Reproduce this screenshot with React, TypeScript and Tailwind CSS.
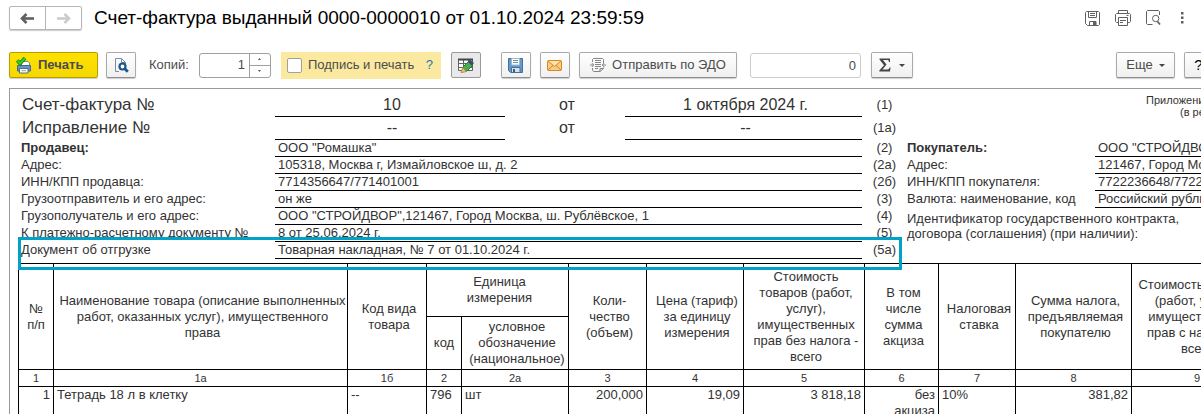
import React from "react";

type TPartyRow = {
    label: string;
    value: string;
    code: string;
    bold?: boolean;
};

const sellerRows: TPartyRow[] = [
    { label: "Продавец:", value: 'ООО "Ромашка"', code: "(2)", bold: true },
    { label: "Адрес:", value: "105318, Москва г, Измайловское ш, д. 2", code: "(2а)" },
    { label: "ИНН/КПП продавца:", value: "7714356647/771401001", code: "(2б)" },
    { label: "Грузоотправитель и его адрес:", value: "он же", code: "(3)" },
    {
        label: "Грузополучатель и его адрес:",
        value: 'ООО "СТРОЙДВОР",121467, Город Москва, ш. Рублёвское, 1',
        code: "(4)",
    },
    { label: "К платежно-расчетному документу №", value: "8 от 25.06.2024 г.", code: "(5)" },
    { label: "Документ об отгрузке", value: "Товарная накладная, № 7 от 01.10.2024 г.", code: "(5а)" },
];

const buyerRows = [
    { label: "Покупатель:", value: 'ООО "СТРОЙДВОР"', bold: true },
    { label: "Адрес:", value: "121467, Город Москва, ш. Рублёвское, 1" },
    { label: "ИНН/КПП покупателя:", value: "7722236648/772201001" },
    { label: "Валюта: наименование, код", value: "Российский рубль, 643" },
];

const columnCodes = ["1", "1а", "1б", "2", "2а", "3", "4", "5", "6", "7", "8", "9"];

const BackIcon = () => (
    <svg width="15" height="11" viewBox="0 0 15 11" fill="none" stroke="currentColor" strokeWidth="2.6">
        <path d="M2 5.500h12" />
        <path d="M6.500 1L2 5.500l4.500 4.500" />
    </svg>
);

const PrintIcon = () => (
    <svg width="16" height="17" viewBox="0 0 16 17">
        <path d="M5.500 4.500h6.500l1.500 1.500v3h-8z" fill="#fff" stroke="#7288a0" />
        <path d="M1.500 8.500h13v5.500h-13z" fill="#6796c4" stroke="#37689a" />
        <path d="M3.500 11.500h8.500v4.500h-8.500z" fill="#fff" stroke="#536d88" />
        <path d="M5.500 13.700h4.500" stroke="#8a9bab" />
        <path d="M1.200 3.500L4 6.500l5-5.500" fill="none" stroke="#187a10" strokeWidth="3.600" />
        <path d="M1.200 3.500L4 6.500l5-5.500" fill="none" stroke="#3fce23" strokeWidth="2" />
    </svg>
);

const PreviewIcon = () => (
    <svg width="15" height="16" viewBox="0 0 15 16" fill="none">
        <path d="M5 14.500H1.500V1.500h6l4 4v2M7.500 1.500v4h4" stroke="#7890a5" />
        <circle cx="8.500" cy="9.500" r="3" fill="#fff" stroke="#1c5689" strokeWidth="2.200" />
        <path d="M10.800 11.800l3 3" stroke="#1c5689" strokeWidth="2.800" />
    </svg>
);

const EditTableIcon = () => (
    <svg width="17" height="16" viewBox="0 0 17 16" fill="none">
        <path d="M1.500 2.500h14v11h-14zM1.500 6.500h14M1.500 10.500h14M6.500 2.500v11M11.500 2.500v11" fill="#fff" stroke="#626262" />
        <path d="M1 2.500h15" stroke="#444" strokeWidth="2" />
        <path d="M5.500 10.500l6.500-6.500 4 4-6.500 6.500z" fill="#46b04a" stroke="#287734" />
        <path d="M11 5l2-2.500 4 3.500-2.500 2.500z" fill="#3d4b6b" />
        <path d="M5.500 10.500l4 4-5.500 1.300z" fill="#ebbb79" stroke="#a37a40" strokeWidth=".7" />
    </svg>
);

const DiskIcon = () => (
    <svg width="15" height="15" viewBox="0 0 15 15">
        <path d="M.5.5h14v14H2.500l-2-2z" fill="#6798c7" stroke="#41719f" />
        <path d="M3.500.5h8v6.500h-8z" fill="#fff" stroke="#9eb9d2" />
        <path d="M5 2.500h5M5 4.500h5" stroke="#6e91b1" />
        <path d="M3.500 9.500h8.500v5h-8.500z" fill="#d7e1e9" stroke="#41719f" />
        <path d="M5 11h2v3H5z" fill="#345e86" />
    </svg>
);

const MailIcon = () => (
    <svg width="15" height="11" viewBox="0 0 15 11">
        <rect x=".5" y=".5" width="14" height="10" rx="1" fill="#f8cd85" stroke="#d8881d" />
        <path d="M1 10l5-4.500M14 10L9 5.500" stroke="#d18424" />
        <path d="M1 1l6.500 5.500L14 1" fill="#ffe2ac" stroke="#d18424" />
    </svg>
);

const EdoIcon = () => (
    <svg width="16" height="16" viewBox="0 0 16 16" fill="none" stroke="#858585">
        <path d="M2.500 5V2.500l1-1h9l1 1V6M2.500 11v2.500l1 1h6.500l3.500-3V10.500M10 14.500v-3h3.500" />
        <path d="M5 3.500h6M5 5.500h6M5 7.500h6M5 9.500h6M5 11.500h3" />
        <path d="M0 8h3.500M1.800 6L3.800 8l-2 2M16 8h-3.500M14.200 6l-2 2 2 2" />
    </svg>
);

const SigmaIcon = () => (
    <svg width="12" height="14" viewBox="0 0 12 14" fill="#454545">
        <path d="M.5.5h10.500v3.500h-1C9.700 2.300 9.300 2 8 2H4l3.500 4.500L3.500 11.500H8.500c1.300 0 1.700-.7 2-2h1L11 13.500H.3v-1L5 7.200.5 1.500z" />
    </svg>
);

const Caret = () => (
    <svg width="6" height="3" viewBox="0 0 6 3" fill="#444">
        <path d="M0 0h6L3 3z" />
    </svg>
);

const SaveOutline = () => (
    <svg width="15" height="15" viewBox="0 0 15 15" fill="none" stroke="#606060">
        <path d="M1.500.5h12l1 1v12l-1 1h-11l-2-2v-11zM3.500.5v6h8v-6M5 2.500h5M5 4.500h5M4.500 14.500v-4h6.500v4" />
        <path d="M8 11h3v3H8z" fill="#606060" stroke="none" />
    </svg>
);

const PrintOutline = () => (
    <svg width="16" height="16" viewBox="0 0 16 16" fill="none" stroke="#606060">
        <path d="M3.500 3.500v-3h9v3M3.500 12.500h-2l-1-1v-7l1-1h13l1 1v7l-1 1h-2" />
        <path d="M3.500 7.500h9v8h-9zM5 10.500h6M5 12.500h3M11.500 5.500h2" />
    </svg>
);

const PreviewOutline = () => (
    <svg width="15" height="16" viewBox="0 0 15 16" fill="none" stroke="#606060">
        <path d="M6.500 14.500h-5l-1-1v-12l1-1h11l1 1V5" />
        <circle cx="9.700" cy="8.500" r="3.200" />
        <path d="M11.500 11.500l2.500 3" strokeWidth="1.800" />
    </svg>
);

const buttonStyle =
    "flex h-[26px] shrink-0 items-center justify-center rounded-[2px] border border-[#a9a9a9] border-b-[#8e8e8e] bg-linear-to-b from-white to-[#f0f0f0] shadow-[0_1px_1px_#cccccc]";

const TitleBar = () => (
    <header className="flex h-9 items-center pl-[9px]">
        <div className="flex h-6 shrink-0 rounded-[2px] border border-[#b5b5b5] shadow-[0_1px_1px_#cccccc]">
            <button type="button" aria-label="Назад" className="flex w-9 items-center justify-center border-r border-[#b5b5b5] text-[#606060]">
                <BackIcon />
            </button>
            <button type="button" aria-label="Вперед" className="flex w-[35px] items-center justify-center text-[#cccccc]">
                <span className="rotate-180"><BackIcon /></span>
            </button>
        </div>
        <h1 className="ml-3 whitespace-nowrap pb-px text-[19px] leading-6 text-black">
            Счет-фактура выданный 0000-0000010 от 01.10.2024 23:59:59
        </h1>
        <div className="ml-auto flex shrink-0 items-center gap-[15px] pr-[17px]">
            <button type="button" aria-label="Сохранить"><SaveOutline /></button>
            <button type="button" aria-label="Печать"><PrintOutline /></button>
            <button type="button" aria-label="Просмотр"><PreviewOutline /></button>
            <button type="button" aria-label="Меню" className="ml-[5px]">
                <svg width="3" height="12" viewBox="0 0 3 12" fill="#606060">
                    <path d="M0 0h2.500v2.500H0zM0 4.500h2.500V7H0zM0 9h2.500v2.500H0z" />
                </svg>
            </button>
        </div>
    </header>
);

const Toolbar = () => (
    <div className="mt-4 flex h-[26px] items-center whitespace-nowrap pl-[9px] text-[13px] text-[#4c4c4c]">
        <button
            type="button"
            className="flex h-[26px] w-[89px] shrink-0 items-center gap-1.5 rounded-[2px] border border-[#b79d00] bg-linear-to-b from-[#ffe100] to-[#f5d800] pl-1.5 font-bold shadow-[0_1px_1px_#cccccc]"
        >
            <PrintIcon />
            Печать
        </button>
        <button type="button" aria-label="Просмотр" className={`${buttonStyle} ml-2 w-[30px]`}>
            <PreviewIcon />
        </button>
        <label htmlFor="copies" className="ml-[13px]">Копий:</label>
        <div className="ml-[10px] flex h-[25px] w-[72px] shrink-0 overflow-hidden rounded-[3px] border border-[#a0a0a0]">
            <input id="copies" type="text" defaultValue="1" className="w-[50px] border-r border-[#a0a0a0] pr-1 text-right outline-none" />
            <div className="flex flex-1 flex-col">
                <button type="button" aria-label="Больше" className="flex flex-1 items-center justify-center border-b border-[#a0a0a0]">
                    <svg width="3" height="2" viewBox="0 0 3 2" fill="#555"><path d="M0 2h3L1.500 0z" /></svg>
                </button>
                <button type="button" aria-label="Меньше" className="flex flex-1 items-center justify-center">
                    <svg width="3" height="2" viewBox="0 0 3 2" fill="#555"><path d="M0 0h3L1.500 2z" /></svg>
                </button>
            </div>
        </div>
        <div className="ml-[10px] flex h-[27px] w-40 shrink-0 items-center bg-[#fbe9a0] pl-1.5">
            <input
                id="sign"
                type="checkbox"
                className="size-[15px] appearance-none rounded-[2px] border border-[#a0a0a0] bg-white checked:bg-[#4c4c4c]"
            />
            <label htmlFor="sign" className="ml-1.5">Подпись и печать</label>
            <a href="#help" className="ml-auto pr-2 text-[#1a78b4]">?</a>
        </div>
        <button
            type="button"
            aria-label="Редактирование"
            className="ml-[10px] flex h-[26px] w-[30px] shrink-0 items-center justify-center rounded-[2px] border border-[#999999] bg-[#e9e9e9]"
        >
            <EditTableIcon />
        </button>
        <button type="button" aria-label="Сохранить" className={`${buttonStyle} ml-5 w-[30px]`}>
            <DiskIcon />
        </button>
        <button type="button" aria-label="Отправить по почте" className={`${buttonStyle} ml-[9px] w-[30px]`}>
            <MailIcon />
        </button>
        <button type="button" className={`${buttonStyle} ml-[9px] w-[158px] gap-1.5`}>
            <EdoIcon />
            Отправить по ЭДО
        </button>
        <input
            type="text"
            aria-label="Сумма"
            defaultValue="0"
            className="ml-[13px] h-[25px] w-[111px] shrink-0 rounded-[3px] border border-[#cccccc] pr-1 text-right"
        />
        <button type="button" aria-label="Итоги" className={`${buttonStyle} ml-[10px] w-[42px] gap-2`}>
            <SigmaIcon />
            <Caret />
        </button>
        <div className="-mr-3 ml-auto flex shrink-0 gap-[9px]">
            <button type="button" className={`${buttonStyle} w-[59px] gap-1.5`}>
                Еще
                <Caret />
            </button>
            <button type="button" aria-label="Справка" className={`${buttonStyle} w-[29px] text-[15px] text-black`}>?</button>
        </div>
    </div>
);

const HeadingRow = ({ label, number, date, code }: { label: string; number: string; date: string; code: string }) => (
    <div className="flex h-[23px] text-center text-[16px] leading-[22px]">
        <div className="w-[257px] pl-1 text-left text-[17px]">{label}</div>
        <div className="w-[230px] border-b border-black pl-1">{number}</div>
        <div className="w-[120px] pl-1">от</div>
        <div className="w-[237px] border-b border-black pl-1">{date}</div>
        <div className="w-[45px] text-[13px]">{code}</div>
    </div>
);

const Parties = () => (
    <div className="relative flex">
        <div>
            <HeadingRow label="Счет-фактура №" number="10" date="1 октября 2024 г." code="(1)" />
            <HeadingRow label="Исправление №" number="--" date="--" code="(1а)" />
            {sellerRows.map((row) => (
                <div key={row.code} className="flex h-[17px] leading-4">
                    <div className={row.bold ? "w-[257px] pl-[3px] font-bold" : "w-[257px] pl-[3px]"}>{row.label}</div>
                    <div className="w-[587px] border-b border-black pl-[3px]">{row.value}</div>
                    <div className="w-[45px] text-center">{row.code}</div>
                </div>
            ))}
        </div>
        <div>
            <div className="h-[46px] pl-[239px] text-[11px] leading-3">
                <div>Приложение № 1</div>
                <div className="pl-[34px]">(в редакции)</div>
            </div>
            {buyerRows.map((row) => (
                <div key={row.label} className="flex h-[17px] leading-4">
                    <div className={row.bold ? "w-[188px] font-bold" : "w-[188px]"}>{row.label}</div>
                    <div className="w-[400px] border-b border-black pl-[3px]">{row.value}</div>
                </div>
            ))}
            <p className="pt-[3px] leading-[15px]">
                Идентификатор государственного контракта,
                <br />
                договора (соглашения) (при наличии):
            </p>
        </div>
        <div className="pointer-events-none absolute top-[143px] left-0 h-[33px] w-[884px] border-[3px] border-[#00a3c7]" />
    </div>
);

const cell = "border border-black px-[3px]";

const GoodsTable = () => (
    <table className="mt-1 w-[1245px] table-fixed border-collapse leading-4">
        <colgroup>
            <col className="w-[35px]" />
            <col className="w-[294px]" />
            <col className="w-[79px]" />
            <col className="w-[35px]" />
            <col className="w-[107px]" />
            <col className="w-[78px]" />
            <col className="w-[97px]" />
            <col className="w-[121px]" />
            <col className="w-[74px]" />
            <col className="w-[77px]" />
            <col className="w-[116px]" />
            <col className="w-[131px]" />
        </colgroup>
        <thead className="[&_th]:border [&_th]:border-black [&_th]:font-normal">
            <tr className="h-[53px]">
                <th rowSpan={2}>№<br />п/п</th>
                <th rowSpan={2} className="pl-1">Наименование товара (описание выполненных<br />работ, оказанных услуг), имущественного<br />права</th>
                <th rowSpan={2} className="pl-1">Код вида<br />товара</th>
                <th colSpan={2} className="pl-1">Единица<br />измерения</th>
                <th rowSpan={2} className="pl-1">Коли-<br />чество<br />(объем)</th>
                <th rowSpan={2} className="pl-1">Цена (тариф)<br />за единицу<br />измерения</th>
                <th rowSpan={2} className="pl-1">Стоимость<br />товаров (работ,<br />услуг),<br />имущественных<br />прав без налога -<br />всего</th>
                <th rowSpan={2} className="pl-1">В том<br />числе<br />сумма<br />акциза</th>
                <th rowSpan={2} className="pl-1">Налоговая<br />ставка</th>
                <th rowSpan={2} className="pl-1">Сумма налога,<br />предъявляемая<br />покупателю</th>
                <th rowSpan={2}>Стоимость товаров<br />(работ, услуг),<br />имущественных<br />прав с налогом -<br />всего</th>
            </tr>
            <tr className="h-[53px]">
                <th>код</th>
                <th className="pl-1">условное<br />обозначение<br />(национальное)</th>
            </tr>
            <tr className="h-[17px] text-[11px]">
                {columnCodes.map((code) => (
                    <th key={code}>{code}</th>
                ))}
            </tr>
        </thead>
        <tbody>
            <tr className="h-[34px] align-top">
                <td className={`${cell} text-right`}>1</td>
                <td className={cell}>Тетрадь 18 л в клетку</td>
                <td className={cell}>--</td>
                <td className={cell}>796</td>
                <td className={cell}>шт</td>
                <td className={`${cell} text-right`}>200,000</td>
                <td className={`${cell} text-right`}>19,09</td>
                <td className={`${cell} text-right`}>3 818,18</td>
                <td className={`${cell} text-right`}>без<br />акциза</td>
                <td className={cell}>10%</td>
                <td className={`${cell} text-right`}>381,82</td>
                <td className={cell} />
            </tr>
        </tbody>
    </table>
);

const App = () => {
    return (
        <div className="h-screen overflow-hidden bg-white font-['Liberation_Sans',Arial,sans-serif]">
            <TitleBar />
            <Toolbar />
            <main className="mt-[10px] ml-[9px] overflow-hidden border-t border-l border-[#999999] pb-4 text-[13px] text-[#333333]">
                <div className="w-max pt-[5px] pl-2">
                    <Parties />
                    <GoodsTable />
                </div>
            </main>
        </div>
    );
};

export default App;
